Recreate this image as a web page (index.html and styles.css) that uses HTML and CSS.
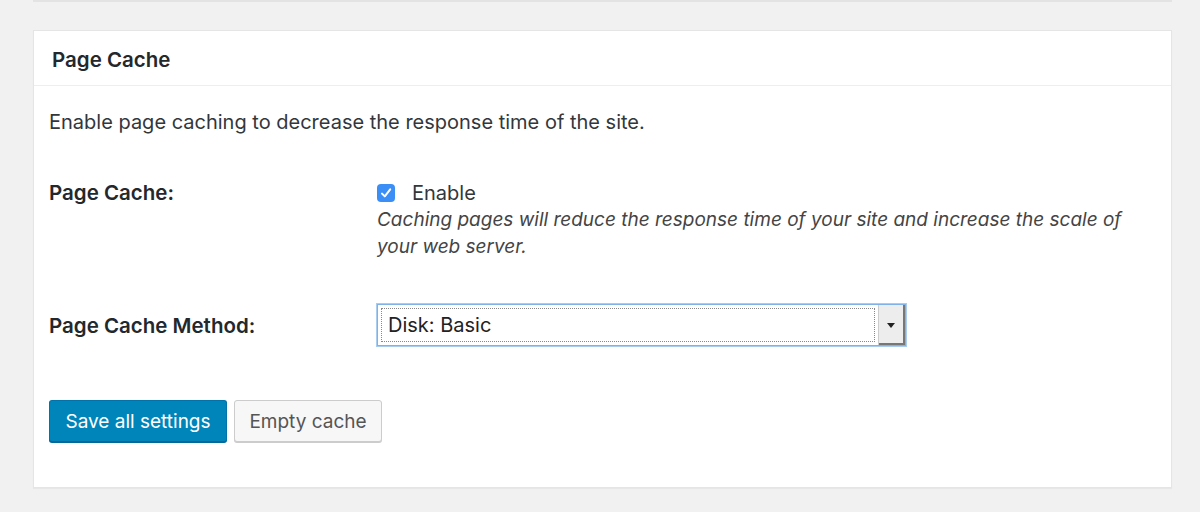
FILE: index.html
```html
<!DOCTYPE html>
<html>
<head>
<meta charset="utf-8">
<link rel="stylesheet" href="styles.css">
</head>
<body>
<div class="prev-box"></div>
<div class="postbox">
  <div class="postbox-head">
    <h2 class="postbox-title">Page Cache</h2>
  </div>
  <div class="postbox-body">
    <p class="intro">Enable page caching to decrease the response time of the site.</p>
    <div class="form-row row-cache">
      <div class="form-label">Page Cache:</div>
      <div class="form-field">
        <label class="check-line">
          <span class="checkbox">
            <svg width="14" height="14" viewBox="0 0 14 14"><path d="M3 7.6 L5.8 10.4 L11.2 3.4" fill="none" stroke="#fff" stroke-width="2" stroke-linecap="round" stroke-linejoin="round"/></svg>
          </span>
          <span class="check-text">Enable</span>
        </label>
        <p class="description">Caching pages will reduce the response time of your site and increase the scale of your web server.</p>
      </div>
    </div>
    <div class="form-row row-method">
      <div class="form-label">Page Cache Method:</div>
      <div class="form-field">
        <div class="select">
          <div class="select-value"><span>Disk: Basic</span></div>
          <div class="select-arrow"><span class="tri"></span></div>
        </div>
      </div>
    </div>
    <div class="actions">
      <button class="btn btn-primary">Save all settings</button>
      <button class="btn btn-secondary">Empty cache</button>
    </div>
  </div>
</div>
</body>
</html>
```
FILE: styles.css
```css
html, body {
  margin: 0;
  padding: 0;
}
body {
  background: #f1f1f1;
  font-family: Inter, "Liberation Sans", Arial, sans-serif;
  color: #23282d;
  width: 1200px;
  height: 512px;
  overflow: hidden;
}
.prev-box {
  margin-left: 33px;
  width: 1139px;
  height: 2px;
  background: #e3e3e3;
}
.postbox {
  margin: 28px 0 0 33px;
  width: 1137px;
  background: #fff;
  border: 1px solid #e5e5e5;
  box-shadow: 0 1px 1px rgba(0,0,0,0.04);
}
.postbox-head {
  height: 54px;
  border-bottom: 1px solid #eeeeee;
  display: flex;
  align-items: center;
  padding-left: 18px;
}
.postbox-title {
  margin: 0;
  font-size: 20.5px;
  font-weight: 600;
  color: #23282d;
  padding-top: 2px;
}
.postbox-body {
  padding: 23px 15px 45px 15px;
}
.intro {
  margin: 0;
  font-size: 20px;
  line-height: 26px;
  color: #32373c;
}
.form-row {
  display: flex;
}
.row-cache {
  margin-top: 44px;
}
.form-label {
  width: 328px;
  flex: none;
  font-size: 20.5px;
  font-weight: 600;
  line-height: 27px;
  color: #23282d;
}
.form-field {
  flex: 1;
}
.check-line {
  display: flex;
  align-items: center;
  height: 27px;
}
.checkbox {
  width: 18px;
  height: 18px;
  border-radius: 4px;
  background: #3a8ef6;
  display: flex;
  align-items: center;
  justify-content: center;
  margin-right: 17px;
}
.check-text {
  font-size: 20px;
  color: #32373c;
}
.description {
  margin: 0;
  font-size: 19px;
  line-height: 27px;
  font-style: italic;
  color: #444;
  width: 760px;
}
.row-method {
  margin-top: 44px;
  align-items: center;
}
.select {
  width: 527px;
  height: 40px;
  border: 1px solid #7fb2e8;
  box-shadow: 0 0 0 1px #a9ccf1;
  display: flex;
  background: #fff;
  box-sizing: content-box;
}
.select-value {
  flex: 1;
  padding: 3px;
  display: flex;
}
.select-value span {
  flex: 1;
  border: 1px dotted #888;
  font-size: 20px;
  line-height: 32px;
  padding-left: 6px;
  color: #222;
}
.select-arrow {
  width: 24px;
  background: #ededed;
  box-shadow: inset -2px -2px 0 #777;
  border-left: 1px solid #ccc;
  display: flex;
  align-items: center;
  justify-content: center;
  padding-right: 2px;
}
.tri {
  width: 0;
  height: 0;
  border-left: 4px solid transparent;
  border-right: 4px solid transparent;
  border-top: 5px solid #222;
}
.actions {
  margin-top: 54px;
  display: flex;
  gap: 7px;
}
.btn {
  font-family: Inter, "Liberation Sans", Arial, sans-serif;
  font-size: 19px;
  height: 42px;
  border-radius: 3px;
  padding: 0;
  cursor: pointer;
}
.btn-primary {
  background: #0085ba;
  border: 1px solid #0073aa;
  border-bottom-color: #006799;
  box-shadow: 0 1px 0 #006799;
  color: #fff;
  width: 178px;
}
.btn-secondary {
  background: #f7f7f7;
  border: 1px solid #cccccc;
  box-shadow: 0 1px 0 #cccccc;
  color: #555;
  width: 148px;
}
```
